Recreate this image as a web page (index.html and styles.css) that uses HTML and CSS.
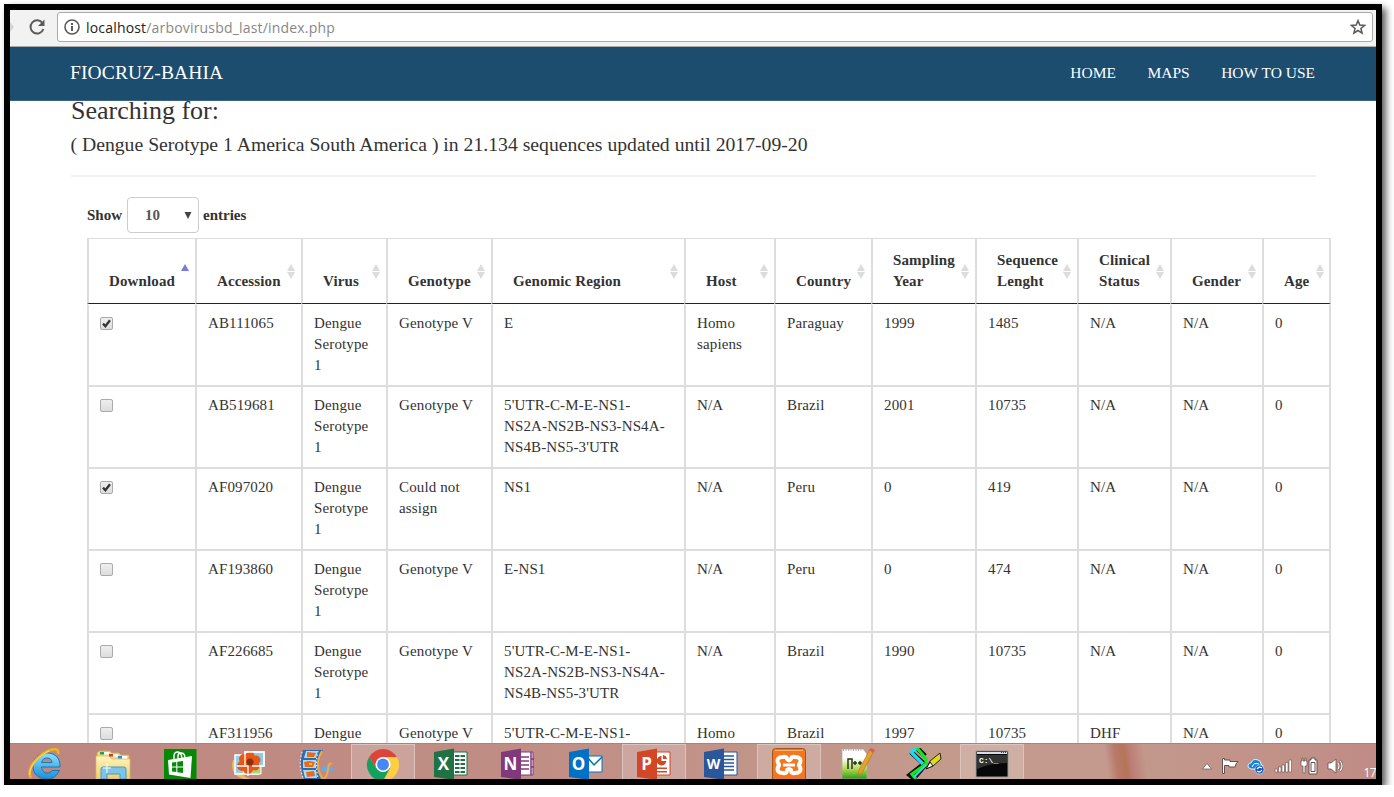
FILE: index.html
```html
<!DOCTYPE html>
<html lang="en">
<head>
<meta charset="utf-8">
<title>Arbovirus database</title>
<link rel="stylesheet" href="styles.css">
</head>
<body>
<div class="frame">
  <div class="toolbar">
    <svg class="forward" width="4" height="12" viewBox="0 0 4 12"><path d="M0 1L4 6L0 11Z" fill="#d4d4d4"/></svg>
    <svg class="reload" width="18" height="18" viewBox="0 0 18 18"><path d="M14.6 5.2A6.6 6.6 0 1 0 15.4 11" fill="none" stroke="#5a5a5a" stroke-width="2"/><path d="M16.5 1.5V8H10Z" fill="#5a5a5a"/></svg>
    <div class="address">
      <svg width="16" height="16" viewBox="0 0 16 16"><circle cx="8" cy="8" r="7" fill="none" stroke="#5a5a5a" stroke-width="1.6"/><path d="M7 7H9V12H7ZM7 4H9V6H7Z" fill="#5a5a5a"/></svg>
      <span class="url"><b>localhost</b>/arbovirusbd_last/index.php</span>
      <svg class="star" width="16" height="16" viewBox="0 0 16 16"><path d="M8 1.6L9.8 6.1L14.6 6.4L10.9 9.5L12.1 14.1L8 11.5L3.9 14.1L5.1 9.5L1.4 6.4L6.2 6.1Z" fill="none" stroke="#5a5a5a" stroke-width="1.5"/></svg>
    </div>
  </div>
  <nav class="navbar">
    <span class="brand">FIOCRUZ-BAHIA</span>
    <span class="links"><span>HOME</span><span>MAPS</span><span>HOW TO USE</span></span>
  </nav>
  <main class="page">
    <h1>Searching for:</h1>
    <h2>( Dengue Serotype 1 America South America ) in 21.134 sequences updated until 2017-09-20</h2>
    <div class="rule"></div>
    <div class="length"><span>Show</span><span class="select"><span>10</span><svg width="8" height="7" viewBox="0 0 8 7"><path d="M0.5 0H7.5L4 7Z" fill="#444"/></svg></span><span>entries</span></div>
    <table>
      <colgroup><col class="w108"><col class="w106"><col class="w85"><col class="w105"><col class="w193"><col class="w90"><col class="w97"><col class="w104"><col class="w102"><col class="w93"><col class="w92"><col class="w69"></colgroup>
      <thead><tr><th class="asc">Download</th><th>Accession</th><th>Virus</th><th>Genotype</th><th>Genomic Region</th><th>Host</th><th>Country</th><th>Sampling<br>Year</th><th>Sequence<br>Lenght</th><th>Clinical<br>Status</th><th>Gender</th><th>Age</th></tr></thead>
      <tbody>
        <tr><td><i class="check on"><svg width="11" height="11" viewBox="0 0 11 11"><path d="M2 5.6L4.4 8.2L9 2.3" fill="none" stroke="#333" stroke-width="2.3"/></svg></i></td><td>AB111065</td><td>Dengue<br>Serotype<br>1</td><td>Genotype V</td><td>E</td><td>Homo<br>sapiens</td><td>Paraguay</td><td>1999</td><td>1485</td><td>N/A</td><td>N/A</td><td>0</td></tr>
        <tr><td><i class="check"></i></td><td>AB519681</td><td>Dengue<br>Serotype<br>1</td><td>Genotype V</td><td>5'UTR-C-M-E-NS1-<br>NS2A-NS2B-NS3-NS4A-<br>NS4B-NS5-3'UTR</td><td>N/A</td><td>Brazil</td><td>2001</td><td>10735</td><td>N/A</td><td>N/A</td><td>0</td></tr>
        <tr><td><i class="check on"><svg width="11" height="11" viewBox="0 0 11 11"><path d="M2 5.6L4.4 8.2L9 2.3" fill="none" stroke="#333" stroke-width="2.3"/></svg></i></td><td>AF097020</td><td>Dengue<br>Serotype<br>1</td><td>Could not<br>assign</td><td>NS1</td><td>N/A</td><td>Peru</td><td>0</td><td>419</td><td>N/A</td><td>N/A</td><td>0</td></tr>
        <tr><td><i class="check"></i></td><td>AF193860</td><td>Dengue<br>Serotype<br>1</td><td>Genotype V</td><td>E-NS1</td><td>N/A</td><td>Peru</td><td>0</td><td>474</td><td>N/A</td><td>N/A</td><td>0</td></tr>
        <tr><td><i class="check"></i></td><td>AF226685</td><td>Dengue<br>Serotype<br>1</td><td>Genotype V</td><td>5'UTR-C-M-E-NS1-<br>NS2A-NS2B-NS3-NS4A-<br>NS4B-NS5-3'UTR</td><td>N/A</td><td>Brazil</td><td>1990</td><td>10735</td><td>N/A</td><td>N/A</td><td>0</td></tr>
        <tr><td><i class="check"></i></td><td>AF311956</td><td>Dengue</td><td>Genotype V</td><td>5'UTR-C-M-E-NS1-</td><td>Homo</td><td>Brazil</td><td>1997</td><td>10735</td><td>DHF</td><td>N/A</td><td>0</td></tr>
      </tbody>
    </table>
  </main>
  <footer class="taskbar">
    <div class="apps">
      <div class="app"><svg viewBox="0 0 36 31"><defs><linearGradient id="ie" x2="0" y2="1"><stop offset="0" stop-color="#8be0ff"/><stop offset="1" stop-color="#1a8fd8"/></linearGradient></defs><path d="M33 19H14.5C15 23 17 25 20 25C22.5 25 24 24 25 22.5H32.3C30 28 26 31 20 31C11.500 31 6 26 6 18C6 10 12 5 20 5C28.500 5 33.500 10.500 33 19ZM14.600 14.600H25C24.600 11.500 23 10 20 10C17 10 15.200 11.500 14.600 14.600Z" fill="url(#ie)" stroke="#1478b8" stroke-width="1"/><path d="M4 30C-1 22 9 9 20 3.500C27 0 32 0 31 6" fill="none" stroke="#f0b31c" stroke-width="2.600"/><path d="M3 27C1 20 11 8 22 3" fill="none" stroke="#ffe473" stroke-width="0.900"/></svg></div>
      <div class="app"><svg viewBox="0 0 36 31"><defs><linearGradient id="fo" x2="0" y2="1"><stop offset="0" stop-color="#fff5bd"/><stop offset="1" stop-color="#efcf6b"/></linearGradient></defs><path d="M2 31V5L4 3H15L17 5H24L26 7H34V31Z" fill="#f2d98a" stroke="#cfa94f"/><path d="M5 4H14V6H5ZM14 6H22V8H14ZM23 8H32V10H23Z" fill="#fff"/><path d="M5 4h4v2H5z" fill="#17ab35"/><path d="M14 6h4v2h-4z" fill="#d7391f"/><path d="M23 8h4v2h-4z" fill="#2090df"/><path d="M1 31V8H14L17 11H35V31Z" fill="url(#fo)" stroke="#d9b75b" stroke-width="0.700"/><path d="M5 4H9V6.500H5Z" fill="#17ab35"/><path d="M9 4H14V6.500H9Z" fill="#fff"/><path d="M14 6H18V8.500H14Z" fill="#d7391f"/><path d="M18 6H23V8.500H18Z" fill="#fff"/><path d="M23 8H27V10.500H23Z" fill="#2090df"/><path d="M27 8H32V10.500H27Z" fill="#fff"/><path d="M6 31V21Q6 19 8 19H29Q31 19 31 21V31H25V26H12V31Z" fill="#7cc4e8" stroke="#4d9ac5"/><path d="M12 15V25M8 20H16" stroke="#fff" stroke-width="1"/></svg></div>
      <div class="app"><svg viewBox="0 0 36 31"><path d="M2 1H34.500V31H2Z" fill="#078907"/><path d="M12 12V8Q12 4 16 4Q19 4 20 10M16 11V8Q16 5 19 5Q23 5 23 10" fill="none" stroke="#fff" stroke-width="1.400"/><path d="M6 12L30 8L28.500 30L7 26.500Z" fill="#fff"/><path d="M10 14.500L14.300 14V18.500H10ZM15.300 13.800L21 13V18.500H15.300ZM10 19.500H14.300V24L10 23.500ZM15.300 19.500H21V25L15.300 24.200Z" fill="#078907"/></svg></div>
      <div class="app"><svg viewBox="0 0 36 31"><path d="M3 12Q-1 26 13 31H21Q7 27 6 12Z" fill="#f2bd58"/><path d="M5 7H28V26H5Z" fill="#8fd0ef" stroke="#fff" stroke-width="1.500"/><path d="M14 14H31V26H14Z" fill="#a6d878" stroke="#fff"/><path d="M15 4H34V18H15Z" fill="#8ccbed" stroke="#fff" stroke-width="1.500"/><g fill="#e95716"><circle cx="14" cy="11" r="5"/><circle cx="20" cy="8" r="4.500"/><circle cx="26" cy="12" r="4.500"/><circle cx="25" cy="18" r="4.500"/><circle cx="18" cy="21" r="5"/><circle cx="12" cy="18" r="5"/></g><circle cx="20" cy="14" r="3.500" fill="#8a3210"/><path d="M7 18H18V28M15 17V4H34V18H22" fill="none" stroke="#fff" stroke-width="1.300"/></svg></div>
      <div class="app"><svg viewBox="0 0 36 31"><path d="M24 20L30 16L29 20H35V23H24Z" fill="#6aa9df"/><path d="M5 2H25Q18 16 23 31H6Q0 17 5 2Z" fill="#2d6aaf"/><path d="M8 3H20L18 10H6ZM5 12H18V20H5ZM5 22H18L19 30H7Z" fill="#a8dbf4"/><path d="M9 4L18 5L16 9L9 9ZM6 14L11 13L17 14L15 19L7 19ZM8 24L16 23L17 28L9 29Z" fill="#ee681b"/><path d="M11 15H14V17H11Z" fill="#ffca32"/><path d="M24 3Q16 17 24 30C32 33 28 12 34 16" fill="none" stroke="#eea744" stroke-width="2.200"/><path d="M4 4Q0 17 5 30M20 3Q17 16 20 30" fill="none" stroke="#d7edff" stroke-width="1.200" stroke-dasharray="1.500 2"/></svg></div>
      <div class="app active"><svg viewBox="0 0 36 31"><path d="M4.200 9A16 16 0 0 1 31.860 9H18L11 20Z" fill="#dc4537"/><path d="M31.860 9A16 16 0 0 1 18 33L25 20L18 9Z" fill="#ffce43"/><path d="M18 33A16 16 0 0 1 4.140 9L11 20L25 20Z" fill="#16a05d"/><circle cx="18" cy="16.500" r="7.600" fill="#fff"/><circle cx="18" cy="16.500" r="5.900" fill="#4587f3"/></svg></div>
      <div class="app"><svg viewBox="0 0 36 31"><path d="M19 4H34V27H19Z" fill="#fff" stroke="#207245"/><path d="M22 8H32M22 12H32M22 16H32M22 20H32M22 24H32" stroke="#207245" stroke-width="2"/><path d="M27 6V26" stroke="#fff" stroke-width="1"/><path d="M1 4L21 0.500V31H15L1 29Z" fill="#207245"/><text x="10.500" y="22" class="letter">X</text></svg></div>
      <div class="app"><svg viewBox="0 0 36 31"><path d="M19 4H33V27H19Z" fill="#fff" stroke="#80397b"/><path d="M21 9H29M21 13H29M21 17H29M21 21H29M31 4V27M31 11H34M31 19H34" stroke="#80397b" stroke-width="1.500"/><path d="M1 4L21 0.500V31H15L1 29Z" fill="#80397b"/><text x="10.500" y="22" class="letter">N</text></svg></div>
      <div class="app"><svg viewBox="0 0 36 31"><path d="M20 8H34V24H20Z" fill="#fff" stroke="#0072c6"/><path d="M20 10L26 17L34 9" fill="none" stroke="#0072c6" stroke-width="1.500"/><path d="M1 4L21 0.500V31H15L1 29Z" fill="#0072c6"/><text x="10.500" y="22" class="letter">O</text></svg></div>
      <div class="app active"><svg viewBox="0 0 36 31"><path d="M19 4H34V27H19Z" fill="#fff" stroke="#d24726"/><path d="M25.500 8A4.800 4.800 0 1 0 30.300 13H25.500Z M27 7A5 5 0 0 1 31 11H27Z M21 19.500H31V21H21ZM21 23H31V24.500H21Z" fill="#d24726"/><path d="M1 4L21 0.500V31H15L1 29Z" fill="#d24726"/><text x="10.500" y="22" class="letter">P</text></svg></div>
      <div class="app"><svg viewBox="0 0 36 31"><path d="M19 4H34V27H19Z" fill="#fff" stroke="#2a579a"/><path d="M21 8H31M21 11.500H31M21 15H31M21 18.500H31M21 22H31" stroke="#2a579a" stroke-width="1.300"/><path d="M1 4L21 0.500V31H15L1 29Z" fill="#2a579a"/><text x="10.500" y="21" class="letter small">W</text></svg></div>
      <div class="app active"><svg viewBox="0 0 36 31"><rect x="1.500" y="0.500" width="33" height="35" rx="3" fill="#f37720" stroke="#a95514"/><path d="M4 2.500H32" stroke="#ffb073"/><path d="M12 9Q16 8 16 11Q18 14 20 11Q20 8 24 9Q31 9 29 15Q27 17 29 19Q31 25 24 25Q20 26 20 22Q18 20 16 22Q16 26 12 25Q5 25 7 19Q9 17 7 15Q5 9 12 9Z" fill="none" stroke="#fff" stroke-width="4" stroke-linejoin="round"/><path d="M12 17H24" stroke="#fff" stroke-width="3"/></svg></div>
      <div class="app"><svg viewBox="0 0 36 31"><defs><linearGradient id="np" x2="0" y2="1"><stop offset="0.300" stop-color="#fff"/><stop offset="0.650" stop-color="#b6dc55"/><stop offset="1" stop-color="#2f9a18"/></linearGradient></defs><path d="M3 1H24L28 6V31H3Z" fill="url(#np)" stroke="#aaa" stroke-width="0.700"/><path d="M4 2H24" stroke="#777" stroke-dasharray="1 1.500"/><path d="M9 21V11H13V21M14 15H18M16 13V17M19 15H23M21 13V17" fill="none" stroke="#253520" stroke-width="1.500"/><path d="M31 1L35 3L23 25L19 27L20 22Z" fill="#e5a12a" stroke="#a46b19" stroke-width="0.500"/><path d="M30 2L32 0L36 2L34 5Z" fill="#d95e50"/></svg></div>
      <div class="app"><svg viewBox="0 0 36 31"><path d="M11 0L19 8M5 4L18 16L4 27L9 31M19 17L8 30" fill="none" stroke="#111" stroke-width="5"/><path d="M4 5L11 0M5 4L17 16" fill="none" stroke="#11dff5" stroke-width="3.400"/><path d="M11 0L20 11V16L6 26L10 31" fill="none" stroke="#18e625" stroke-width="3.200"/><path d="M20 17L8 29" stroke="#24dff0" stroke-width="2"/><path d="M21 20L24 13L34 5L35 11L27 18Z" fill="#dfdd14" stroke="#222"/><path d="M20 21L24 14L27 18Z" fill="#fff" stroke="#111"/></svg></div>
      <div class="app active"><svg viewBox="0 0 36 31"><path d="M2 3H34V29H2Z" fill="#080808" stroke="#999"/><path d="M3 4H33V6H3Z" fill="#d4dde4"/><path d="M27 4.500H32" stroke="#345" stroke-dasharray="1 1"/><path d="M3 7H33V15Q15 15 3 21Z" fill="#333"/><text x="5" y="15" class="prompt">C:\_</text></svg></div>
    </div>
    <div class="tray">
      <svg width="10" height="8" viewBox="0 0 10 8"><path d="M0.500 7L5 1.500L9.500 7Z" fill="#fff" stroke="#66504d" stroke-width="0.700"/></svg>
      <svg width="18" height="18" viewBox="0 0 18 18"><path d="M1.500 1.500H3.500V3H9V4.500H17L15 7L14 10H8V8.500H3.500V16.500H1.500Z" fill="#fff" stroke="#66504d"/></svg>
      <svg width="18" height="18" viewBox="0 0 18 18"><path d="M4 12Q0 11 1 8Q2 6 4 6Q6 1 11 3Q14 4 14 7Q17 8 16 12Z" fill="#1387de" stroke="#e4f2fc"/><path d="M5 10Q7 5 12 7" fill="none" stroke="#fff"/><circle cx="12.500" cy="12.500" r="4.500" fill="#1454bd" stroke="#cde5ff" stroke-width="0.700"/><path d="M10 12Q12 9 15 11M15 13Q13 16 10 14" fill="none" stroke="#fff" stroke-width="1.300"/></svg>
      <svg width="18" height="16" viewBox="0 0 18 16"><path d="M1 11H3.500V14H1ZM4.500 9H7V14H4.500ZM8 7H10.500V14H8ZM11.500 4.500H14V14H11.500ZM15 2H17.500V14H15Z" fill="#fff" stroke="#66504d" stroke-width="0.600"/></svg>
      <svg width="18" height="18" viewBox="0 0 18 18"><path d="M2 1V4H1V9H3V16H5V9H7V4H6V1H5V4H3V1Z" fill="#fff" stroke="#66504d" stroke-width="0.700"/><path d="M9 3H11V1H15V3H17V17H9Z" fill="#fff" stroke="#66504d" stroke-width="1"/><path d="M11 5.500H15V14.500H11Z" fill="#fff" stroke="#66504d"/></svg>
      <svg width="18" height="18" viewBox="0 0 18 18"><path d="M1 6H4L9 2V16L4 12H1Z" fill="#fff" stroke="#66504d" stroke-width="0.800"/><path d="M11 6Q13 9 11 12M13 4Q17 9 13 14" fill="none" stroke="#66504d" stroke-width="2.200"/><path d="M11 6Q13 9 11 12M13 4Q17 9 13 14" fill="none" stroke="#fff" stroke-width="1.200"/></svg>
      <span class="clock">17</span>
    </div>
  </footer>
</div>
</body>
</html>
```
FILE: styles.css
```css
* { box-sizing: border-box; }
body { margin: 0; background: #fff; overflow: hidden; font-family: "Liberation Serif", serif; color: #333; }
.frame { display: flex; flex-direction: column; width: 1378px; height: 781px; margin: 4px 0 0 4px; border: 6px solid #000; box-shadow: 4px 4px 7px rgba(0,0,0,.65); overflow: hidden; }
.toolbar { display: flex; align-items: center; flex: none; height: 37px; padding: 0 3px 2px 0; background: #f2f2f2; border-bottom: 1px solid #aaa; }
.reload { margin-left: 14px; margin-right: 11px; }
.address { display: flex; align-items: center; flex: 1; height: 30px; padding: 0 6px; border: 1px solid #aaa; border-radius: 3px; background: #fff; }
.url { margin-left: 6px; font: 14px "Open Sans", sans-serif; color: #888; letter-spacing: .18px; }
.url b { font-weight: 400; color: #222; }
.star { margin-left: auto; }
.navbar { display: flex; justify-content: space-between; align-items: center; flex: none; height: 54px; padding: 0 61px 2px 60px; background: #1c4c6e; border-bottom: 1px solid #386581; color: #fff; }
.brand { font-size: 19.5px; letter-spacing: .12px; padding-top: 1px; }
.links { display: flex; gap: 31.5px; font-size: 15.5px; }
.page { flex: 1; min-height: 0; overflow: hidden; background: #fff; }
h1, h2 { margin: 0 0 0 61px; font-weight: 400; white-space: nowrap; }
h1 { font-size: 26px; line-height: 20px; }
h2 { font-size: 19.7px; line-height: 22px; margin-top: 12px; margin-left: 60.5px; }
.rule { height: 2px; margin: 20px 60px 0 61px; background: #f1f1f1; }
.length { display: flex; align-items: center; height: 36px; margin: 20px 0 5px 77px; font-size: 15px; font-weight: 700; }
.select { display: flex; align-items: center; justify-content: space-between; width: 72px; height: 36px; margin: 0 4px 0 5px; padding: 0 6px 0 17px; border: 1px solid #ccc; border-radius: 4px; color: #555; }
table { table-layout: fixed; width: 1244px; margin-left: 77.5px; border-collapse: separate; border-spacing: 0; font-size: 15px; line-height: 21px; }
.w108 { width: 108px; } .w106 { width: 106px; } .w85 { width: 85px; } .w105 { width: 105px; } .w193 { width: 193px; } .w90 { width: 90px; }
.w97 { width: 97px; } .w104 { width: 104px; } .w102 { width: 102px; } .w93 { width: 93px; } .w92 { width: 92px; } .w69 { width: 69px; }
table { margin-left: 77px; }
th { position: relative; height: 66px; padding: 0 0 11px 20px; text-align: left; vertical-align: bottom; letter-spacing: .13px; border: 0 solid #ddd; border-left-width: 2px; border-top: 1px solid #ddd; border-bottom: 1px solid #222; }
td { height: 82px; padding: 8px 0 0 11px; vertical-align: top; border: 0 solid #ddd; border-left-width: 2px; border-top-width: 1px; border-bottom-width: 1px; white-space: nowrap; letter-spacing: .13px; }
tbody tr:first-child td { border-top-color: #fff; }
th:last-child, td:last-child { border-right-width: 2px; }
th::before, th::after { content: ""; position: absolute; right: 6px; border: 4.5px solid transparent; }
th:last-child::before, th:last-child::after { right: 5px; }
th::before { top: 25px; border-top: 0; border-bottom: 7px solid #dcdcdc; }
th::after { top: 33px; border-bottom: 0; border-top: 7px solid #dcdcdc; }
.asc::before { border-bottom-color: #7b7bde; }
.asc::after { display: none; }
.check { display: block; width: 13px; height: 13px; margin: 5px 0 0; border: 1px solid #aaa; border-radius: 2px; background: linear-gradient(#eee, #ddd); }
td:first-child { padding-top: 7px; }
.check svg { display: block; }
.taskbar { display: flex; flex: none; height: 36px; border-top: 1px solid #a78480; background: linear-gradient(82deg, transparent 1088px, #b9796a 1098px, #b47558 1107px, #bd7e76 1113px, transparent 1127px), linear-gradient(90deg, #bd8780 0, #c08d84 500px, #c39b8d 950px, #c39a8d 1100px, #c08c85 100%); overflow: hidden; }
.apps { display: flex; flex: none; gap: 3.65px; margin-left: 3px; }
.app { width: 64px; height: 36px; padding-top: 4px; flex: none; text-align: center; }
.app svg { width: 36px; height: 31px; }
.active { background: rgba(255,255,255,.2); border: 1px solid #dcc3be; border-bottom: 0; padding-top: 3px; }
.letter { font: 700 17px "Open Sans", sans-serif; fill: #fff; text-anchor: middle; }
.small { font-size: 14px; }
.prompt { font: 700 8px "Liberation Mono", monospace; fill: #fff; }
.tray { display: flex; align-items: center; gap: 8.5px; margin-left: auto; height: 43px; flex: none; }
.clock { margin: 15px 0 0 10px; font: 12px/14px "Open Sans", sans-serif; color: #fff; letter-spacing: -.6px; }
```
